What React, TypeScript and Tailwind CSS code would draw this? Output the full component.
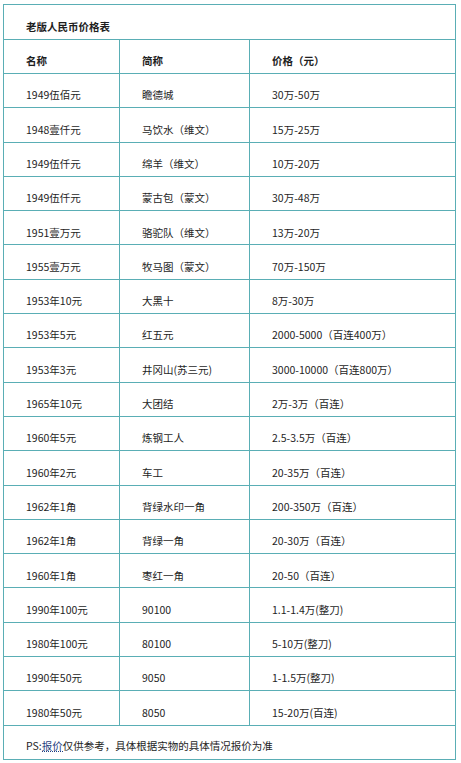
const rows: [string, string, string][] = [
  ["1949伍佰元", "瞻德城", "30万-50万"],
  ["1948壹仟元", "马饮水（维文）", "15万-25万"],
  ["1949伍仟元", "绵羊（维文）", "10万-20万"],
  ["1949伍仟元", "蒙古包（蒙文）", "30万-48万"],
  ["1951壹万元", "骆驼队（维文）", "13万-20万"],
  ["1955壹万元", "牧马图（蒙文）", "70万-150万"],
  ["1953年10元", "大黑十", "8万-30万"],
  ["1953年5元", "红五元", "2000-5000（百连400万）"],
  ["1953年3元", "井冈山(苏三元)", "3000-10000（百连800万）"],
  ["1965年10元", "大团结", "2万-3万（百连）"],
  ["1960年5元", "炼钢工人", "2.5-3.5万（百连）"],
  ["1960年2元", "车工", "20-35万（百连）"],
  ["1962年1角", "背绿水印一角", "200-350万（百连）"],
  ["1962年1角", "背绿一角", "20-30万（百连）"],
  ["1960年1角", "枣红一角", "20-50（百连）"],
  ["1990年100元", "90100", "1.1-1.4万(整刀)"],
  ["1980年100元", "80100", "5-10万(整刀)"],
  ["1990年50元", "9050", "1-1.5万(整刀)"],
  ["1980年50元", "8050", "15-20万(百连)"],
];

function Row({ cells, bold, h }: { cells: string[]; bold?: boolean; h: string }) {
  return (
    <div className={`grid grid-cols-[115px_130px_1fr] border-t border-[#5aaeb5] ${h}`}>
      {cells.map((c, i) => (
        <div
          key={i}
          className={`flex items-center pt-[10px] pl-[22px] ${i > 0 ? "border-l border-[#5aaeb5]" : ""} ${bold ? "font-bold" : ""}`}
        >
          {c}
        </div>
      ))}
    </div>
  );
}

export default function App() {
  return (
    <div className="bg-white w-[461px] h-[763px] pt-[4px] pl-[3px] text-[10.5px] leading-none text-[#1e1e1e] font-['Noto_Sans_CJK_SC',sans-serif]">
      <div className="w-[453px] border border-[#5aaeb5]">
        <div className="h-[34px] flex items-center pt-[11px] pl-[22px] font-bold">老版人民币价格表</div>
        <Row cells={["名称", "简称", "价格（元）"]} bold h="h-[34px]" />
        {rows.map((r, i) => (
          <Row key={i} cells={r} h="h-[34.3px]" />
        ))}
        <div className="h-[34px] flex items-center pt-[9px] pl-[22px] border-t border-[#5aaeb5]">
          PS:
          <span className="text-[#1f3f7f] border-b border-dotted border-[#1f3f7f]">报价</span>
          仅供参考，具体根据实物的具体情况报价为准
        </div>
      </div>
    </div>
  );
}
